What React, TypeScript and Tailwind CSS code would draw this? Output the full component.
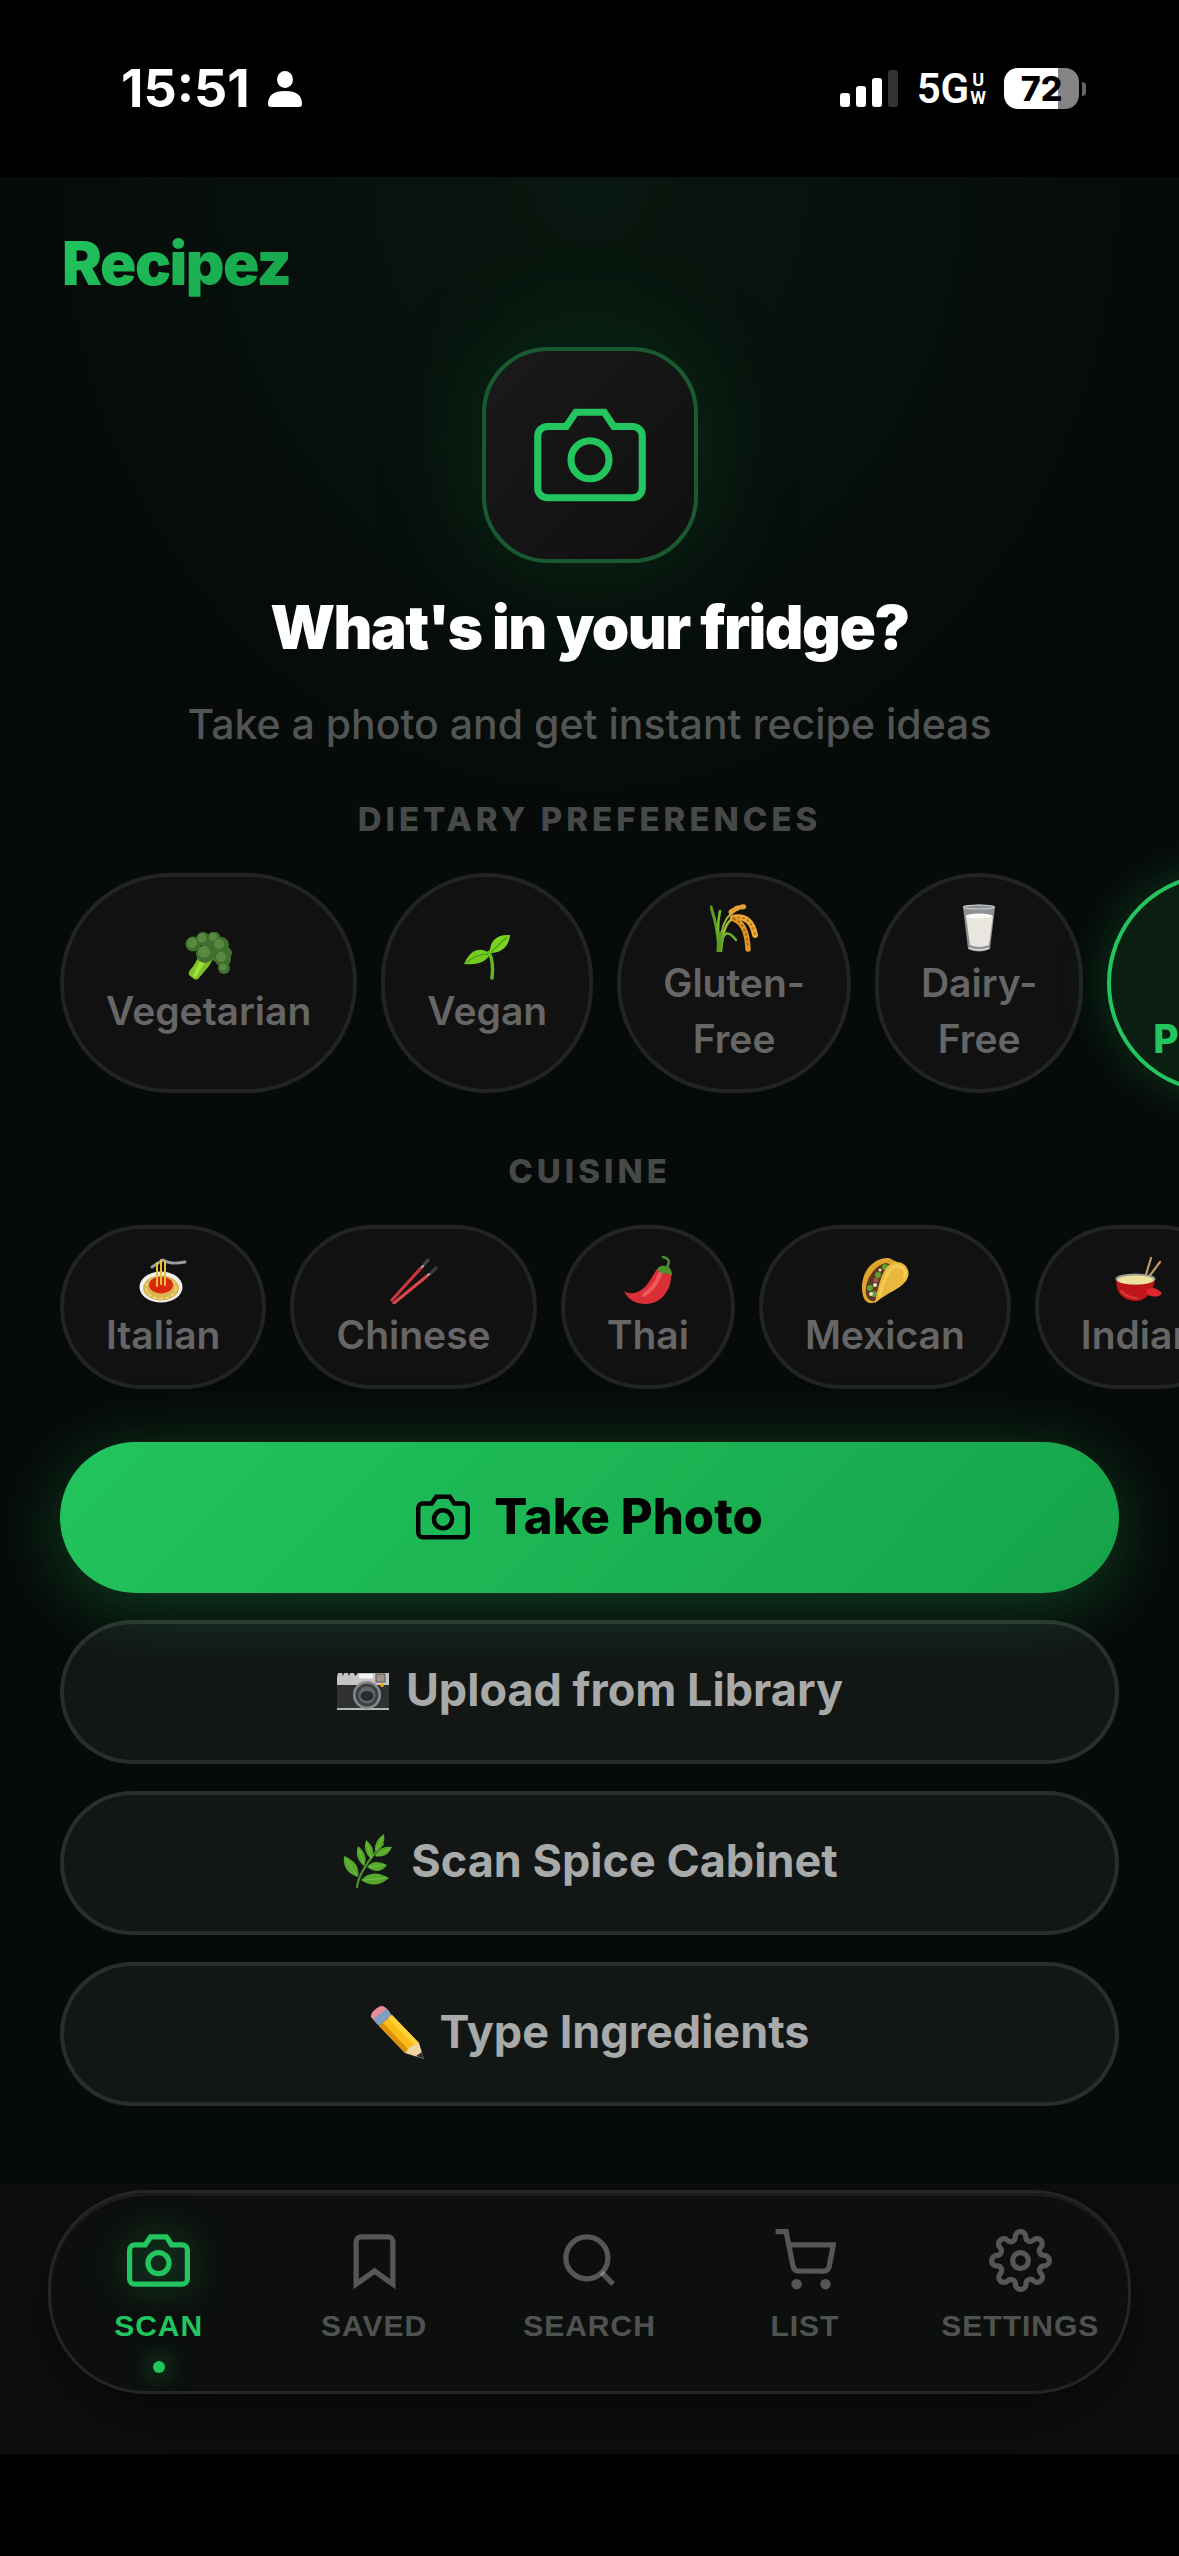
import React, { useState } from "react";

type ArtProps = { className: string };
type Art = (props: ArtProps) => React.JSX.Element;

const Broccoli: Art = ({ className }) => (
  <svg viewBox="0 0 48 48" className={className} aria-hidden="true">
    <path d="M14 22 L28 27 L24 34 L13 47 Q11 48 9 47 L4 43 Q3 41 5 38 Q11 32 14 22Z" fill="#7fc225" />
    <path d="M17 25 L21 28 L11 45 L8 44Z" fill="#a8e044" />
    <g fill="#426f2f">
      <circle cx="8" cy="12" r="7.5" />
      <circle cx="18" cy="7" r="7" />
      <circle cx="29" cy="6" r="6.5" />
      <circle cx="26" cy="12" r="8" />
      <circle cx="36" cy="13" r="8" />
      <circle cx="41" cy="21" r="6" />
      <circle cx="34" cy="23" r="8" />
      <circle cx="38" cy="27" r="8" />
      <circle cx="39" cy="36" r="6" />
      <circle cx="20" cy="22" r="9" />
    </g>
    <g fill="#578a40">
      <circle cx="7" cy="11" r="5" />
      <circle cx="17" cy="6" r="4.5" />
      <circle cx="28" cy="5" r="4" />
      <circle cx="34" cy="12" r="5" />
      <circle cx="36" cy="25" r="5" />
      <circle cx="38" cy="35" r="3.5" />
      <circle cx="19" cy="20" r="6" />
    </g>
  </svg>
);

const Seedling: Art = ({ className }) => (
  <svg viewBox="0 0 48 48" className={className} aria-hidden="true">
    <path d="M26 20 Q31 30 29 46" fill="none" stroke="#63b61f" strokeWidth="3.5" strokeLinecap="round" />
    <path d="M27 21 C26 10 33 2 47 3 C46 15 38 21 27 21Z" fill="#7bd321" />
    <path d="M28 20 L44 5" stroke="#4d9a15" strokeWidth="1.2" />
    <path d="M27 22 C19 15 8 16 1 32 C13 33 23 31 27 22Z" fill="#74cb20" />
    <path d="M26 22 Q13 22 3 31" fill="none" stroke="#4d9a15" strokeWidth="1.2" />
  </svg>
);

const RiceSheaf: Art = ({ className }) => (
  <svg viewBox="0 0 48 48" className={className} aria-hidden="true">
    <g fill="none" strokeLinecap="round">
      <path d="M9 47 Q8 24 1 3" stroke="#5b9e22" strokeWidth="3" />
      <path d="M10 47 Q6 26 10 7" stroke="#79bd2e" strokeWidth="2.5" />
      <path d="M10 47 Q10 25 17 14 Q22 8 30 4" stroke="#94b83a" strokeWidth="2" />
      <path d="M11 47 Q13 18 24 14" stroke="#a6b83a" strokeWidth="2.5" />
      <path d="M11 44 Q13 20 26 36" stroke="#6db32b" strokeWidth="2.5" />
      <path d="M9 47 L10 30" stroke="#5b9e22" strokeWidth="5" />
      <path d="M21 8 Q28 2 36 3" stroke="#e7a233" strokeWidth="5" strokeDasharray="2 4" />
      <path d="M23 14 Q41 10 45 31" stroke="#efaa35" strokeWidth="6" />
      <path d="M24 15 Q37 20 38 45" stroke="#e09526" strokeWidth="5.5" />
      <path d="M23 14 Q41 10 45 31" stroke="#b97716" strokeWidth="2" strokeDasharray="1 4" />
      <path d="M24 15 Q37 20 38 45" stroke="#a9690f" strokeWidth="2" strokeDasharray="1 4" />
    </g>
  </svg>
);

const Milk: Art = ({ className }) => (
  <svg viewBox="0 0 48 48" className={className} aria-hidden="true">
    <path d="M8 3 Q24 -2 40 3 L35 45 Q24 50 13 45Z" fill="#8d9194" />
    <path d="M11 12 Q24 8 38 12 L34 41 Q24 45 15 41Z" fill="#e9e6df" />
    <ellipse cx="24" cy="12" rx="13" ry="2.5" fill="#fbfaf7" />
    <ellipse cx="24" cy="3" rx="15.5" ry="2" fill="none" stroke="#c7cacb" strokeWidth="1.2" />
    <path d="M14 44 Q24 48 34 44" fill="none" stroke="#d9dcdd" strokeWidth="1.5" />
  </svg>
);

const Flex: Art = ({ className }) => (
  <svg viewBox="0 0 48 48" className={className} aria-hidden="true">
    <path d="M14 4 Q24 2 24 12 L18 18 Q17 26 22 26 Q30 16 41 24 Q50 44 30 45 Q8 46 4 36 Q4 14 14 4Z" fill="#f9c43c" />
  </svg>
);

const Spaghetti: Art = ({ className }) => (
  <svg viewBox="0 0 48 48" className={className} aria-hidden="true">
    <ellipse cx="22" cy="31" rx="21.5" ry="15.5" fill="#f2f0ec" />
    <ellipse cx="22" cy="32" rx="18" ry="12.5" fill="#d9b650" />
    <ellipse cx="22" cy="32" rx="15" ry="10.5" fill="none" stroke="#f1d984" strokeWidth="1.5" strokeDasharray="4 2" />
    <ellipse cx="22" cy="29" rx="12" ry="8.5" fill="#d8290f" />
    <path d="M13 11 L24 4 Q32 9 46 6" fill="none" stroke="#9b9c9e" strokeWidth="3" strokeLinecap="round" />
    <path d="M18 30 V7 M22 28 V4 M26 29 V5" stroke="#e8bf3f" strokeWidth="2" strokeLinecap="round" />
  </svg>
);

const Chopsticks: Art = ({ className }) => (
  <svg viewBox="0 0 48 48" className={className} aria-hidden="true">
    <g strokeLinecap="round">
      <path d="M2 44 L31 12" stroke="#c8363b" strokeWidth="3.2" />
      <path d="M4 47 L37 20" stroke="#d8454a" strokeWidth="3.2" />
      <path d="M33 10 L38 4" stroke="#454545" strokeWidth="3.2" />
      <path d="M40 18 L46 12" stroke="#3a3a3a" strokeWidth="3.2" />
      <path d="M32 11 L33 10 M38 19 L39 18" stroke="#a9a9a9" strokeWidth="2" />
    </g>
  </svg>
);

const Chili: Art = ({ className }) => (
  <svg viewBox="0 0 48 48" className={className} aria-hidden="true">
    <path d="M33 13 C27 22 22 35 10 37 Q4 38 0 35 Q6 48 22 48 C38 48 48 33 47 18 Q40 11 33 13Z" fill="#d92f36" />
    <path d="M36 18 Q31 32 20 39" fill="none" stroke="#f0595d" strokeWidth="4" strokeLinecap="round" />
    <path d="M33 14 Q35 9 41 10 Q48 10 48 20 L43 17 L39 18Z" fill="#4f8f2e" />
    <path d="M43 11 Q48 3 39 1" fill="none" stroke="#4f8f2e" strokeWidth="2.5" strokeLinecap="round" />
  </svg>
);

const Taco: Art = ({ className }) => (
  <svg viewBox="0 0 48 48" className={className} aria-hidden="true">
    <path d="M2 40 C-3 20 10 1 28 2 L38 7 L15 46 Q5 50 2 40Z" fill="#dfa42d" />
    <path d="M5 38 C3 24 14 9 25 7 L32 9 L14 45 Q7 46 5 38Z" fill="#5b3a1e" />
    <g fill="#5f9f33">
      <circle cx="9" cy="32" r="3" />
      <circle cx="17" cy="19" r="3" />
      <circle cx="13" cy="38" r="3" />
      <circle cx="24" cy="11" r="3" />
    </g>
    <g fill="#e9ddcf">
      <circle cx="10" cy="38" r="2" />
      <circle cx="14" cy="29" r="2" />
      <circle cx="19" cy="14" r="1.5" />
    </g>
    <circle cx="15" cy="24" r="2.5" fill="#a0574a" />
    <path d="M14 47 C17 30 22 8 34 6 C46 5 51 17 45 25 C38 34 27 36 14 47Z" fill="#eab83c" />
    <path d="M19 39 C22 26 27 12 35 10 C42 9 46 16 43 21" fill="none" stroke="#f4cd58" strokeWidth="3" strokeLinecap="round" />
  </svg>
);

const Fondue: Art = ({ className }) => (
  <svg viewBox="0 0 48 48" className={className} aria-hidden="true">
    <path d="M30 22 L36 2 M33 22 L45 6" stroke="#c09a66" strokeWidth="2.2" strokeLinecap="round" />
    <path d="M1 23 Q1 44 20 45 Q35 45 40 25Z" fill="#bf1518" />
    <path d="M31 35 Q37 28 47 37 Q44 43 33 39Z" fill="#e0262a" />
    <ellipse cx="20.5" cy="23" rx="20" ry="5.5" fill="#9a9a96" />
    <ellipse cx="20.5" cy="24" rx="18" ry="4.5" fill="#eee39d" />
    <path d="M6 35 Q12 42 22 42" fill="none" stroke="#d63a3c" strokeWidth="2" strokeLinecap="round" />
  </svg>
);

const CameraPhoto: Art = ({ className }) => (
  <svg viewBox="0 -6 54 54" className={className} aria-hidden="true">
    <path d="M1 8 L2 4 H6 L7 7 L8 4 H12 L13 7 L14 4 H18 L19 7 L22 4 H53 V41 H1Z" fill="#c4c5c5" />
    <path d="M1 16 H53 V41 H1Z" fill="#303132" />
    <path d="M1 40 H53" stroke="#b5b6b7" strokeWidth="2" />
    <rect x="23" y="5" width="14" height="4.5" rx="1" fill="#f4f4f4" />
    <rect x="40" y="5" width="9" height="8" fill="#a0948d" stroke="#555" strokeWidth="1" />
    <circle cx="31" cy="26" r="14" fill="#88898b" />
    <circle cx="31" cy="26" r="11.5" fill="#3e4145" />
    <circle cx="31" cy="26" r="8.5" fill="#65686c" />
    <ellipse cx="31" cy="27" rx="6.5" ry="5" fill="#292b2e" />
    <circle cx="46" cy="16" r="2" fill="#f0a51c" />
  </svg>
);

const Herb: Art = ({ className }) => (
  <svg viewBox="0 0 54 54" className={className} aria-hidden="true">
    <path d="M16 53 Q18 36 42 10" fill="none" stroke="#4a9427" strokeWidth="2.2" strokeLinecap="round" />
    <g fill="#55a82c">
      <path d="M17 43 Q1 38 3 22 Q20 29 17 43Z" />
      <path d="M23 32 Q13 24 17 12 Q28 21 23 32Z" />
      <path d="M30 25 Q21 17 25 6 Q36 15 30 25Z" />
      <path d="M34 17 Q33 6 43 0 Q45 12 34 17Z" />
      <path d="M34 22 Q39 11 51 13 Q46 25 34 22Z" />
      <path d="M26 33 Q33 24 46 31 Q38 42 26 33Z" />
      <path d="M20 46 Q31 34 48 44 Q34 56 20 46Z" />
    </g>
    <path d="M5 25 L16 42 M18 15 L23 31 M26 9 L30 24 M42 3 L35 16 M48 15 L35 22 M28 33 L44 31 M23 46 L45 44" stroke="#74bf42" strokeWidth="1" fill="none" />
  </svg>
);

const Pencil: Art = ({ className }) => (
  <svg viewBox="0 0 54 54" className={className} aria-hidden="true">
    <path d="M1 12 Q0 8 7 3 Q12 -1 16 3 L20 7 L7 19Z" fill="#ec8b95" />
    <path d="M16 4 L22 10 L9 21 L3 14Z" fill="#7f9fbf" />
    <path d="M22 10 L49 38 L35 48 L9 21Z" fill="#fbbc15" />
    <path d="M22 10 L49 38 L45 41 L18 13Z" fill="#ffd23a" />
    <path d="M13 18 L39 45 L35 48 L9 21Z" fill="#d9910d" />
    <path d="M49 38 L54 54 L35 48 L40 42Z" fill="#f1d6a4" />
    <path d="M52 47 L54 54 L46 51Z" fill="#333" />
  </svg>
);

const stroke = { fill: "none", stroke: "currentColor", viewBox: "0 0 24 24", "aria-hidden": true } as const;

function CameraIcon({ className, weight = 2 }: { className: string; weight?: number }) {
  return (
    <svg {...stroke} strokeWidth={weight} className={className}>
      <path d="M23 19a2 2 0 0 1-2 2H3a2 2 0 0 1-2-2V8a2 2 0 0 1 2-2h4l2-3h6l2 3h4a2 2 0 0 1 2 2z" />
      <circle cx="12" cy="13" r="4" />
    </svg>
  );
}

const BookmarkIcon: Art = ({ className }) => (
  <svg {...stroke} strokeWidth={2} className={className}>
    <path d="m19 21-7-5-7 5V5a2 2 0 0 1 2-2h10a2 2 0 0 1 2 2z" />
  </svg>
);

const SearchIcon: Art = ({ className }) => (
  <svg {...stroke} strokeWidth={2} className={className}>
    <circle cx="11" cy="11" r="8" />
    <path d="m21 21-4.35-4.35" />
  </svg>
);

const CartIcon: Art = ({ className }) => (
  <svg {...stroke} strokeWidth={2} className={className}>
    <circle cx="9" cy="21" r="1" />
    <circle cx="20" cy="21" r="1" />
    <path d="M1 1h4l2.68 13.39a2 2 0 0 0 2 1.61h9.72a2 2 0 0 0 2-1.61L23 6H6" />
  </svg>
);

const GearIcon: Art = ({ className }) => (
  <svg {...stroke} strokeWidth={2} className={className}>
    <circle cx="12" cy="12" r="3" />
    <path d="M19.4 15a1.65 1.65 0 0 0 .33 1.82l.06.06a2 2 0 0 1 0 2.83 2 2 0 0 1-2.83 0l-.06-.06a1.65 1.65 0 0 0-1.82-.33 1.65 1.65 0 0 0-1 1.51V21a2 2 0 0 1-2 2 2 2 0 0 1-2-2v-.09A1.65 1.65 0 0 0 9 19.4a1.65 1.65 0 0 0-1.82.33l-.06.06a2 2 0 0 1-2.83 0 2 2 0 0 1 0-2.83l.06-.06a1.65 1.65 0 0 0 .33-1.82 1.65 1.65 0 0 0-1.51-1H3a2 2 0 0 1-2-2 2 2 0 0 1 2-2h.09A1.65 1.65 0 0 0 4.6 9a1.65 1.65 0 0 0-.33-1.82l-.06-.06a2 2 0 0 1 0-2.83 2 2 0 0 1 2.83 0l.06.06a1.65 1.65 0 0 0 1.82.33H9a1.65 1.65 0 0 0 1-1.51V3a2 2 0 0 1 2-2 2 2 0 0 1 2 2v.09a1.65 1.65 0 0 0 1 1.51 1.65 1.65 0 0 0 1.82-.33l.06-.06a2 2 0 0 1 2.83 0 2 2 0 0 1 0 2.83l-.06.06a1.65 1.65 0 0 0-.33 1.82V9a1.65 1.65 0 0 0 1.51 1H21a2 2 0 0 1 2 2 2 2 0 0 1-2 2h-.09a1.65 1.65 0 0 0-1.51 1z" />
  </svg>
);

function StatusBar() {
  return (
    <div className="flex h-[177px] items-center justify-between bg-black pl-[121px] pr-[93px] text-white">
      <div className="flex items-center gap-[18px]">
        <span className="text-[52px] leading-[60px] font-bold">15:51</span>
        <svg viewBox="0 0 34 36" className="h-9 w-[34px]" fill="currentColor" aria-hidden="true">
          <ellipse cx="17" cy="8.5" rx="8" ry="8.5" />
          <path d="M0 33 Q0 20 17 20 Q34 20 34 33 Q34 36 31 36 H3 Q0 36 0 33Z" />
        </svg>
      </div>
      <div className="flex items-center">
        <svg viewBox="0 0 58 38" className="h-[38px] w-[58px]" aria-hidden="true">
          <rect x="0" y="23" width="10" height="14" rx="3" fill="#fff" />
          <rect x="16" y="16" width="10" height="21" rx="3" fill="#fff" />
          <rect x="32" y="8" width="10" height="29" rx="3" fill="#fff" />
          <rect x="48" y="0" width="10" height="37" rx="3" fill="#333" />
        </svg>
        <span className="ml-[19px] font-[Roboto,sans-serif] text-[42px] leading-[48px] font-semibold">5G</span>
        <span className="ml-px flex flex-col items-center font-[Roboto,sans-serif] text-[18px] leading-[18px] font-bold">
          <span>U</span>
          <span>W</span>
        </span>
        <span className="ml-[18px] flex h-[41px] w-[75px] items-center justify-center rounded-[14px] bg-linear-to-r from-white from-72% to-[#848484] to-72% text-[34px] leading-[42px] font-extrabold text-black">
          72
        </span>
        <span className="ml-[3px] h-[14px] w-[4px] rounded-r-full bg-[#666]" />
      </div>
    </div>
  );
}

type ChipData = { lines: string[]; art: Art };

const diets: ChipData[] = [
  { lines: ["Vegetarian"], art: Broccoli },
  { lines: ["Vegan"], art: Seedling },
  { lines: ["Gluten-", "Free"], art: RiceSheaf },
  { lines: ["Dairy-", "Free"], art: Milk },
  { lines: ["High", "Protein"], art: Flex },
];

const cuisines: ChipData[] = [
  { lines: ["Italian"], art: Spaghetti },
  { lines: ["Chinese"], art: Chopsticks },
  { lines: ["Thai"], art: Chili },
  { lines: ["Mexican"], art: Taco },
  { lines: ["Indian"], art: Fondue },
];

function ChipRow({ title, chips, initial }: { title: string; chips: ChipData[]; initial?: string }) {
  const [selected, setSelected] = useState<string | undefined>(initial);
  return (
    <section>
      <h2 className="text-center text-[33px] leading-[48px] font-extrabold tracking-[4px] text-[#474949]">{title}</h2>
      <div className="-my-8 flex gap-6 overflow-hidden px-[60px] pt-[62px] pb-8">
        {chips.map(({ lines, art: Picture }) => {
          const name = lines.join(" ");
          const on = name === selected;
          return (
            <button
              key={name}
              type="button"
              aria-pressed={on}
              onClick={() => setSelected(on ? undefined : name)}
              className={
                on
                  ? "flex shrink-0 flex-col items-center justify-center rounded-full border-4 border-[#22c55e] bg-[#0a1f11] px-[42px] pt-6 pb-[22px] text-[39px] leading-[56px] font-extrabold text-[#22c55e] shadow-[0_0_48px_rgba(34,197,94,0.25)]"
                  : "flex shrink-0 flex-col items-center justify-center rounded-full border-4 border-[#222323] bg-[#111111] px-[42px] pt-6 pb-[22px] text-[39px] leading-[56px] font-semibold text-[#666666]"
              }
            >
              <span className="flex h-[54px] items-center">
                <Picture className="size-12" />
              </span>
              {lines.map((line) => (
                <span key={line}>{line}</span>
              ))}
            </button>
          );
        })}
      </div>
    </section>
  );
}

const actions: { label: string; art: Art }[] = [
  { label: "Upload from Library", art: CameraPhoto },
  { label: "Scan Spice Cabinet", art: Herb },
  { label: "Type Ingredients", art: Pencil },
];

const tabs: { label: string; icon: Art }[] = [
  { label: "SCAN", icon: CameraIcon },
  { label: "SAVED", icon: BookmarkIcon },
  { label: "SEARCH", icon: SearchIcon },
  { label: "LIST", icon: CartIcon },
  { label: "SETTINGS", icon: GearIcon },
];

function TabBar() {
  const [active, setActive] = useState("SCAN");
  return (
    <div className="overflow-hidden bg-[#0f0f0f] px-12 pt-[6px] pb-[60px]">
      <nav className="grid h-[204px] grid-cols-5 rounded-[98px] border-[3px] border-[#242625] bg-[#0c0f0d] shadow-[0_24px_96px_rgba(0,0,0,0.6),inset_0_3px_0_rgba(255,255,255,0.06)]">
        {tabs.map(({ label, icon: Icon }) => {
          const on = label === active;
          return (
            <button
              key={label}
              type="button"
              aria-current={on ? "page" : undefined}
              onClick={() => setActive(label)}
              className={
                on
                  ? "flex flex-col items-center pt-9 text-[#22c55e]"
                  : "flex flex-col items-center pt-9 text-white/30"
              }
            >
              <Icon
                className={on ? "size-[63px] drop-shadow-[0_0_18px_rgba(34,197,94,0.5)]" : "size-[63px]"}
              />
              <span className="mt-4 font-['Liberation_Sans',Arial,sans-serif] text-[30px] leading-[36px] font-bold tracking-[1px]">
                {label}
              </span>
              {on && <span className="mt-[17px] size-3 rounded-full bg-[#22c55e] shadow-[0_0_24px_#22c55e]" />}
            </button>
          );
        })}
      </nav>
    </div>
  );
}

export default function App() {
  return (
    <div className="flex min-h-screen flex-col overflow-hidden bg-black font-[Inter,sans-serif]">
      <StatusBar />
      <div className="flex flex-col bg-[#060a09] bg-[radial-gradient(ellipse_50%_34%_at_50%_0%,rgba(34,197,94,0.07),transparent)]">
        <header className="px-[62px] pt-[50px] pb-12">
          <h1 className="w-fit bg-linear-135 from-[#22c55e] to-[#16a34a] bg-clip-text text-[60px] leading-[72px] font-black tracking-tight text-transparent">
            Recipez
          </h1>
        </header>
        <main className="flex flex-col pb-[78px]">
          <div className="flex size-[216px] items-center justify-center self-center rounded-[66px] border-4 border-[#1a5a31] bg-linear-135 from-[#1a1a1a] to-[#0f0f0f] text-[#22c55e] shadow-[0_0_120px_rgba(34,197,94,0.15)]">
            <CameraIcon className="size-[114px]" weight={1.5} />
          </div>
          <p className="mt-7 text-center text-[60px] leading-[72px] font-black tracking-tight text-white">
            What's in your fridge?
          </p>
          <p className="mt-[31px] mb-[41px] text-center text-[41px] leading-[60px] font-medium text-[#535554]">
            Take a photo and get instant recipe ideas
          </p>
          <ChipRow title="DIETARY PREFERENCES" chips={diets} initial="High Protein" />
          <div className="h-[54px]" />
          <ChipRow title="CUISINE" chips={cuisines} />
          <div className="mt-[53px] flex flex-col gap-[27px] px-[60px]">
            <button
              type="button"
              className="flex h-[151px] items-center justify-center gap-6 rounded-full bg-linear-135 from-[#22c55e] to-[#16a34a] pb-0.5 text-[49px] leading-[60px] font-extrabold text-black shadow-[0_12px_72px_rgba(34,197,94,0.3)]"
            >
              <CameraIcon className="size-[54px]" />
              Take Photo
            </button>
            {actions.map(({ label, art: Picture }) => (
              <button
                key={label}
                type="button"
                className="flex h-36 items-center justify-center gap-4 rounded-full border-4 border-white/10 bg-white/5 pb-1 text-[45px] leading-[60px] font-bold text-[#a8a9a9]"
              >
                <Picture className="size-[54px]" />
                {label}
              </button>
            ))}
          </div>
        </main>
      </div>
      <TabBar />
    </div>
  );
}
